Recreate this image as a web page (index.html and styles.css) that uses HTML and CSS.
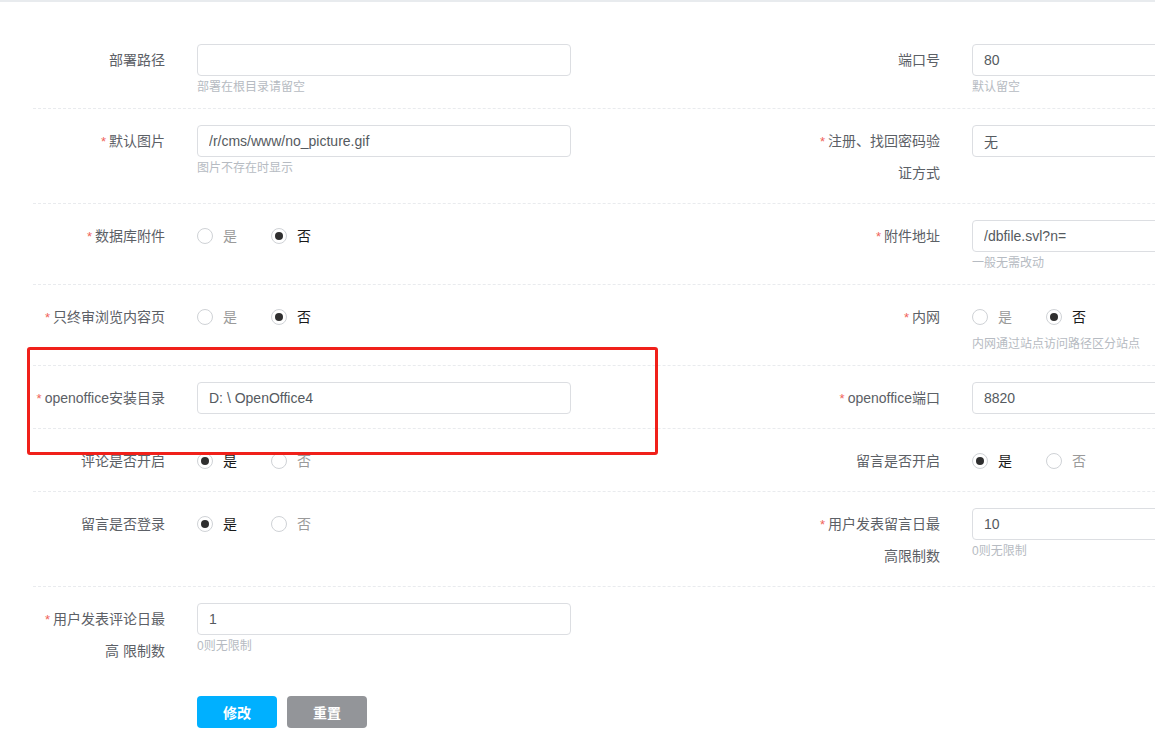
FILE: index.html
```html
<!DOCTYPE html>
<html lang="zh-CN">
<head>
<meta charset="utf-8">
<title>设置</title>
<link rel="stylesheet" href="styles.css">
</head>
<body>
<div class="page">
  <form class="form">
    <div class="row">
      <div class="field">
        <label class="label">部署路径</label>
        <div class="control">
          <input class="input" type="text" value="">
          <div class="help">部署在根目录请留空</div>
        </div>
      </div>
      <div class="field">
        <label class="label">端口号</label>
        <div class="control">
          <input class="input" type="text" value="80">
          <div class="help">默认留空</div>
        </div>
      </div>
    </div>

    <div class="row">
      <div class="field">
        <label class="label"><span class="req">*</span>默认图片</label>
        <div class="control">
          <input class="input" type="text" value="/r/cms/www/no_picture.gif">
          <div class="help">图片不存在时显示</div>
        </div>
      </div>
      <div class="field">
        <label class="label"><span class="req">*</span>注册、找回密码验证方式</label>
        <div class="control">
          <input class="input" type="text" value="无">
        </div>
      </div>
    </div>

    <div class="row">
      <div class="field">
        <label class="label"><span class="req">*</span>数据库附件</label>
        <div class="control">
          <div class="radios">
            <span class="radio"><span class="dot"></span><span class="rtext">是</span></span>
            <span class="radio on"><span class="dot"></span><span class="rtext">否</span></span>
          </div>
        </div>
      </div>
      <div class="field">
        <label class="label"><span class="req">*</span>附件地址</label>
        <div class="control">
          <input class="input" type="text" value="/dbfile.svl?n=">
          <div class="help">一般无需改动</div>
        </div>
      </div>
    </div>

    <div class="row">
      <div class="field">
        <label class="label"><span class="req">*</span>只终审浏览内容页</label>
        <div class="control">
          <div class="radios">
            <span class="radio"><span class="dot"></span><span class="rtext">是</span></span>
            <span class="radio on"><span class="dot"></span><span class="rtext">否</span></span>
          </div>
        </div>
      </div>
      <div class="field">
        <label class="label"><span class="req">*</span>内网</label>
        <div class="control">
          <div class="radios">
            <span class="radio"><span class="dot"></span><span class="rtext">是</span></span>
            <span class="radio on"><span class="dot"></span><span class="rtext">否</span></span>
          </div>
          <div class="help">内网通过站点访问路径区分站点</div>
        </div>
      </div>
    </div>

    <div class="row">
      <div class="field">
        <label class="label"><span class="req">*</span>openoffice安装目录</label>
        <div class="control">
          <input class="input" type="text" value="D: \ OpenOffice4">
        </div>
      </div>
      <div class="field">
        <label class="label"><span class="req">*</span>openoffice端口</label>
        <div class="control">
          <input class="input" type="text" value="8820">
        </div>
      </div>
    </div>

    <div class="row">
      <div class="field">
        <label class="label">评论是否开启</label>
        <div class="control">
          <div class="radios">
            <span class="radio on"><span class="dot"></span><span class="rtext">是</span></span>
            <span class="radio"><span class="dot"></span><span class="rtext">否</span></span>
          </div>
        </div>
      </div>
      <div class="field">
        <label class="label">留言是否开启</label>
        <div class="control">
          <div class="radios">
            <span class="radio on"><span class="dot"></span><span class="rtext">是</span></span>
            <span class="radio"><span class="dot"></span><span class="rtext">否</span></span>
          </div>
        </div>
      </div>
    </div>

    <div class="row">
      <div class="field">
        <label class="label">留言是否登录</label>
        <div class="control">
          <div class="radios">
            <span class="radio on"><span class="dot"></span><span class="rtext">是</span></span>
            <span class="radio"><span class="dot"></span><span class="rtext">否</span></span>
          </div>
        </div>
      </div>
      <div class="field">
        <label class="label"><span class="req">*</span>用户发表留言日最高限制数</label>
        <div class="control">
          <input class="input" type="text" value="10">
          <div class="help">0则无限制</div>
        </div>
      </div>
    </div>

    <div class="row last">
      <div class="field">
        <label class="label"><span class="req">*</span>用户发表评论日最高 限制数</label>
        <div class="control">
          <input class="input" type="text" value="1">
          <div class="help">0则无限制</div>
        </div>
      </div>
    </div>

    <div class="actions">
      <button type="button" class="btn primary">修改</button>
      <button type="button" class="btn gray">重置</button>
    </div>
  </form>
  <div class="highlight"></div>
</div>
</body>
</html>
```

FILE: styles.css
```css
* { box-sizing: border-box; }

html, body {
  margin: 0;
  padding: 0;
  background: #fff;
  overflow: hidden;
}

body {
  font-family: "Liberation Sans", "Noto Sans CJK SC", sans-serif;
  font-size: 14px;
  color: #515a6e;
}

.page {
  position: relative;
  width: 1600px;
  min-height: 750px;
  border-top: 2px solid #e8ebee;
  padding: 26px 0 0 33px;
}

.form {
  margin: 0;
}

.row {
  display: grid;
  grid-template-columns: 775px 775px;
  padding: 16px 0 14px;
  border-bottom: 1px dashed #e9ebee;
}

.row.last {
  border-bottom: none;
}

.field {
  display: flex;
  align-items: flex-start;
}

.label {
  width: 132px;
  flex: none;
  margin-right: 32px;
  text-align: right;
  font-size: 14px;
  line-height: 32px;
  color: #5c6066;
}

.req {
  color: #f0645a;
  font-size: 13px;
  line-height: 0;
  margin-right: 3px;
}

.control {
  width: 374px;
  flex: none;
}

.input {
  display: block;
  width: 374px;
  height: 32px;
  padding: 0 11px;
  border: 1px solid #dcdee2;
  border-radius: 4px;
  font-family: "Liberation Sans", "Noto Sans CJK SC", sans-serif;
  font-size: 14px;
  color: #555a60;
  background: #fff;
  outline: none;
}

.help {
  height: 18px;
  padding-top: 5px;
  line-height: 13px;
  font-size: 12px;
  color: #b6bbc2;
  white-space: nowrap;
  overflow: visible;
}

.radios {
  display: flex;
  align-items: center;
  height: 32px;
}

.radio {
  display: flex;
  align-items: center;
  margin-right: 34px;
}

.dot {
  width: 16px;
  height: 16px;
  border: 1px solid #cfd2d6;
  border-radius: 50%;
  margin-right: 10px;
  position: relative;
  background: #fff;
}

.radio.on .dot::after {
  content: "";
  position: absolute;
  left: 3px;
  top: 3px;
  width: 8px;
  height: 8px;
  border-radius: 50%;
  background: #2f2f2f;
}

.rtext {
  color: #9a9a9a;
  line-height: 20px;
}

.radio.on .rtext {
  color: #1a1a1a;
}

.actions {
  display: flex;
  gap: 10px;
  padding-left: 164px;
  margin-top: 15px;
}

.btn {
  width: 80px;
  height: 32px;
  border: none;
  border-radius: 4px;
  color: #fff;
  font-family: "Liberation Sans", "Noto Sans CJK SC", sans-serif;
  font-size: 14px;
  font-weight: bold;
  cursor: pointer;
}

.btn.primary {
  background: #00b0ff;
}

.btn.gray {
  background: #939599;
}

.highlight {
  position: absolute;
  left: 27px;
  top: 345px;
  width: 631px;
  height: 108px;
  border: 3px solid #f0201a;
  border-radius: 3px;
  pointer-events: none;
}
```
